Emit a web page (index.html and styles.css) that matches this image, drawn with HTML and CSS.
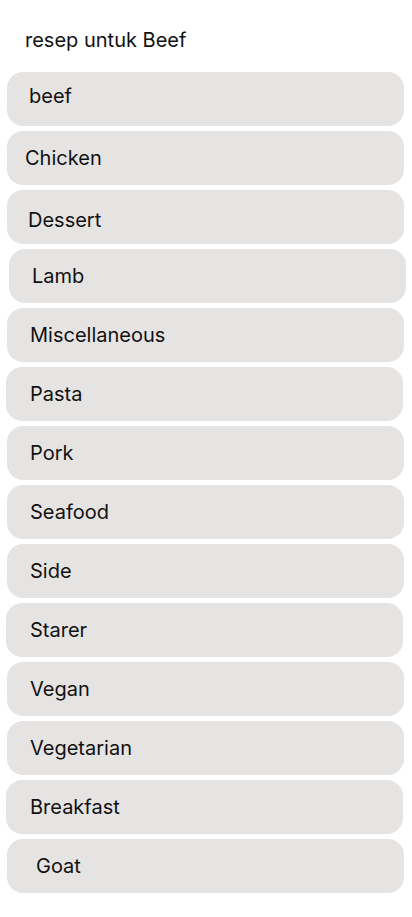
FILE: index.html
```html
<!DOCTYPE html>
<html lang="id">
<head>
<meta charset="utf-8">
<meta name="viewport" content="width=device-width, initial-scale=1">
<title>resep untuk Beef</title>
<link rel="stylesheet" href="styles.css">
</head>
<body>
<main class="page">
  <h1 class="title">resep untuk Beef</h1>
  <ul class="list">
    <li class="item item-up"><span class="label">beef</span></li>
    <li class="item item-tight"><span class="label">Chicken</span></li>
    <li class="item item-down"><span class="label">Dessert</span></li>
    <li class="item item-right"><span class="label">Lamb</span></li>
    <li class="item"><span class="label">Miscellaneous</span></li>
    <li class="item item-left"><span class="label">Pasta</span></li>
    <li class="item"><span class="label">Pork</span></li>
    <li class="item"><span class="label">Seafood</span></li>
    <li class="item"><span class="label">Side</span></li>
    <li class="item item-left"><span class="label">Starer</span></li>
    <li class="item"><span class="label">Vegan</span></li>
    <li class="item"><span class="label">Vegetarian</span></li>
    <li class="item item-left"><span class="label">Breakfast</span></li>
    <li class="item item-wide"><span class="label">Goat</span></li>
  </ul>
</main>
</body>
</html>
```
FILE: styles.css
```css
* { box-sizing: border-box; }

html, body {
  margin: 0;
  padding: 0;
  background: #ffffff;
}

body {
  font-family: Inter, "Noto Sans", Roboto, sans-serif;
  color: #111111;
}

.page {
  padding-top: 28px;
}

.title {
  margin: 0 0 20px 0;
  padding-left: 25px;
  font-size: 20px;
  font-weight: 400;
  line-height: normal;
}

.list {
  list-style: none;
  margin: 0;
  padding: 0;
  display: flex;
  flex-direction: column;
  gap: 5px;
}

.item {
  display: flex;
  align-items: center;
  height: 54px;
  margin: 0 8px 0 7px;
  padding: 0 0 0 23px;
  background: #e6e3e3;
  border-radius: 16px;
  font-size: 20px;
  line-height: normal;
}

.item-up { padding-bottom: 6px; padding-left: 22px; }
.item-down { padding-top: 6px; padding-left: 21px; }
.item-tight { padding-left: 18px; }
.item-right { margin-left: 9px; margin-right: 6px; }
.item-left { margin-left: 6px; margin-right: 9px; padding-left: 24px; }
.item-wide { padding-left: 29px; }

.label {
  display: block;
}
```
